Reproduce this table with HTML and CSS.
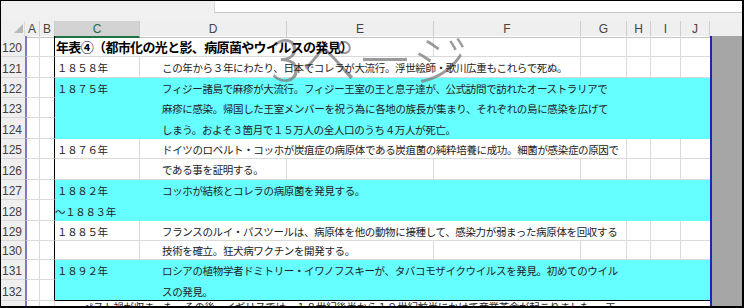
FILE: index.html
```html
<!DOCTYPE html>
<html lang="ja">
<head>
<meta charset="utf-8">
<title>年表④</title>
<link rel="stylesheet" href="styles.css">
</head>
<body>
<div class="frame">
  <div class="topbar"><div class="fx"></div></div>
  <div class="colhdr">
    <div class="hc corner"><svg width="24" height="14" viewBox="0 0 24 14"><polygon points="22,3 22,12 13,12" fill="#b9b9b9"/></svg></div>
    <div class="hc">A</div>
    <div class="hc">B</div>
    <div class="hc sel">C</div>
    <div class="hc">D</div>
    <div class="hc">E</div>
    <div class="hc">F</div>
    <div class="hc">G</div>
    <div class="hc">H</div>
    <div class="hc">I</div>
    <div class="hc">J</div>
    <div class="hc rest"></div>
  </div>
  <div class="sheet">
    <!-- 120 -->
    <div class="rh r1">120</div><div class="ca g r1"></div><div class="cb g r1"></div>
    <div class="cc to-e g t title r1"><span>年表④（都市化の光と影、病原菌やウイルスの発見）</span></div>
    <div class="cf g r1"></div><div class="cg g r1"></div><div class="ch g r1"></div><div class="ci g r1"></div><div class="cj g r1"></div>

    <!-- 121 -->
    <div class="rh r2">121</div><div class="ca g r2"></div><div class="cb g r2"></div>
    <div class="cc g t yr r2"><span>１８５８年</span></div>
    <div class="cd to-f g t dx r2"><span>この年から３年にわたり、日本でコレラが大流行。浮世絵師・歌川広重もこれらで死ぬ。</span></div>
    <div class="cg g r2"></div><div class="ch g r2"></div><div class="ci g r2"></div><div class="cj g r2"></div>

    <!-- 122-124 -->
    <div class="rh r3">122</div><div class="ca g r3"></div><div class="cb g r3"></div>
    <div class="rh r4">123</div><div class="ca g r4"></div><div class="cb g r4"></div>
    <div class="rh r5">124</div><div class="ca g r5"></div><div class="cb g r5"></div>
    <div class="fill cc to-j r3 h3"></div>
    <div class="cc t yr r3"><span>１８７５年</span></div>
    <div class="cd to-j t dx r3"><span>フィジー諸島で麻疹が大流行。フィジー王室の王と息子達が、公式訪問で訪れたオーストラリアで</span></div>
    <div class="cd to-j t dx r4"><span>麻疹に感染。帰国した王室メンバーを祝う為に各地の族長が集まり、それぞれの島に感染を広げて</span></div>
    <div class="cd to-j t dx r5"><span>しまう。およそ３箇月で１５万人の全人口のうち４万人が死亡。</span></div>

    <!-- 125-126 -->
    <div class="rh r6">125</div><div class="ca g r6"></div><div class="cb g r6"></div>
    <div class="cc g t yr r6"><span>１８７６年</span></div>
    <div class="cd to-g g t dx r6"><span>ドイツのロベルト・コッホが炭疽症の病原体である炭疽菌の純粋培養に成功。細菌が感染症の原因で</span></div>
    <div class="ch g r6"></div><div class="ci g r6"></div><div class="cj g r6"></div>
    <div class="rh r7">126</div><div class="ca g r7"></div><div class="cb g r7"></div>
    <div class="cc g r7"></div>
    <div class="cd g t dx r7"><span>である事を証明する。</span></div>
    <div class="ce g r7"></div><div class="cf g r7"></div><div class="cg g r7"></div><div class="ch g r7"></div><div class="ci g r7"></div><div class="cj g r7"></div>

    <!-- 127-128 -->
    <div class="rh r8">127</div><div class="ca g r8"></div><div class="cb g r8"></div>
    <div class="rh r9">128</div><div class="ca g r9"></div><div class="cb g r9"></div>
    <div class="fill cc to-j r8 h2"></div>
    <div class="cc t yr r8"><span>１８８２年</span></div>
    <div class="cd to-j t dx r8"><span>コッホが結核とコレラの病原菌を発見する。</span></div>
    <div class="cc to-d t yr tilde r9"><span>～１８８３年</span></div>

    <!-- 129-130 -->
    <div class="rh r10">129</div><div class="ca g r10"></div><div class="cb g r10"></div>
    <div class="cc g t yr r10"><span>１８８５年</span></div>
    <div class="cd to-g g t dx r10"><span>フランスのルイ・パスツールは、病原体を他の動物に接種して、感染力が弱まった病原体を回収する</span></div>
    <div class="ch g r10"></div><div class="ci g r10"></div><div class="cj g r10"></div>
    <div class="rh r11">130</div><div class="ca g r11"></div><div class="cb g r11"></div>
    <div class="cc g r11"></div>
    <div class="cd to-e g t dx r11"><span>技術を確立。狂犬病ワクチンを開発する。</span></div>
    <div class="cf g r11"></div><div class="cg g r11"></div><div class="ch g r11"></div><div class="ci g r11"></div><div class="cj g r11"></div>

    <!-- 131-132 -->
    <div class="rh r12">131</div><div class="ca g r12"></div><div class="cb g r12"></div>
    <div class="rh r13">132</div><div class="ca g r13"></div><div class="cb g r13"></div>
    <div class="fill end cc to-j r12 h2"></div>
    <div class="cc t yr r12"><span>１８９２年</span></div>
    <div class="cd to-j t dx r12"><span>ロシアの植物学者ドミトリー・イワノフスキーが、タバコモザイクウイルスを発見。初めてのウイル</span></div>
    <div class="cd to-j t dx r13"><span>スの発見。</span></div>

    <!-- 133 -->
    <div class="rh r14">133</div><div class="ca g r14"></div><div class="cb g plain r14"></div>
    <div class="cc to-j t low r14"><span>ペスト禍が収まった　その後、イギリスでは、１８世紀後半から１９世紀前半にかけて産業革命が起こりました。　工</span></div>

    <div class="pb"></div>
    <div class="out"></div>
    <div class="wm">3ページ</div>
  </div>
</div>
</body>
</html>
```

FILE: styles.css
```css
* { box-sizing: border-box; }
html, body { margin: 0; padding: 0; }
body {
  width: 744px;
  height: 308px;
  overflow: hidden;
  background: #000;
  font-family: "Noto Sans CJK JP", sans-serif;
}
.frame {
  width: 744px;
  height: 308px;
  border-style: solid;
  border-color: #000;
  border-width: 1px 2px 2px 1px;
  background: #fff;
  overflow: hidden;
  display: flex;
  flex-direction: column;
}
.topbar {
  flex: none;
  height: 20px;
  background: #f0f0f0;
  padding-left: 213px;
}
.fx {
  height: 12px;
  background: #fff;
  border-left: 1px solid #d6d6d6;
  border-bottom: 1px solid #c8c8c8;
}
.colhdr, .sheet {
  display: grid;
  grid-template-columns: 24px 15px 15px 85px 147px 147px 147px 46px 24px 30px 29px 2px 30px;
}
.colhdr {
  flex: none;
  height: 15px;
  background: #efefef;
  font: 12px/13px "Liberation Sans", Arial, sans-serif;
  color: #444;
}
.hc {
  border-right: 1px solid #cdcdcd;
  border-bottom: 1px solid #c4c4c4;
  text-align: center;
  padding-top: 2px;
}
.hc.corner { padding: 0; border-right-color: #dcdcdc; }
.hc.corner svg { display: block; }
.hc.sel {
  background: #d3d3d3;
  border-bottom: 2px solid #217346;
  color: #2a6a44;
}
.hc.rest { grid-column: 12 / 14; border-right: 0; }

.sheet {
  flex: 1;
  position: relative;
  overflow: hidden;
  grid-template-rows: 21px 21px 20px 20px 21px 20px 21px 20px 21px 20px 19px 20px 21px 20px;
  font-size: 10.5px;
  color: #222;
}

/* columns */
.rh { grid-column: 1; }
.ca { grid-column: 2; }
.cb { grid-column: 3; }
.cc { grid-column: 4; }
.cd { grid-column: 5; }
.ce { grid-column: 6; }
.cf { grid-column: 7; }
.cg { grid-column: 8; }
.ch { grid-column: 9; }
.ci { grid-column: 10; }
.cj { grid-column: 11; }
.to-d { grid-column-end: 6; }
.to-e { grid-column-end: 7; }
.to-f { grid-column-end: 8; }
.to-g { grid-column-end: 9; }
.to-j { grid-column-end: 12; }

/* rows */
.r1 { grid-row: 1; }
.r2 { grid-row: 2; }
.r3 { grid-row: 3; }
.r4 { grid-row: 4; }
.r5 { grid-row: 5; }
.r6 { grid-row: 6; }
.r7 { grid-row: 7; }
.r8 { grid-row: 8; }
.r9 { grid-row: 9; }
.r10 { grid-row: 10; }
.r11 { grid-row: 11; }
.r12 { grid-row: 12; }
.r13 { grid-row: 13; }
.r14 { grid-row: 14; }
.h2 { grid-row-end: span 2; }
.h3 { grid-row-end: span 3; }

.rh {
  background: #efefef;
  border-bottom: 1px solid #d6d6d6;
  font: 12px/13px "Liberation Sans", Arial, sans-serif;
  color: #404040;
  display: flex;
  align-items: flex-end;
  padding: 0 0 1px 1px;
}
.g {
  border-right: 1px solid #dadada;
  border-bottom: 1px solid #dadada;
}
.ca { border-left: 2px solid #7d79c9; }
.cb.g { border-right-color: #000; }
.cb.g.plain { border-right-color: #dadada; }
.cj.g { border-right: 0; }

.fill { background: #66ffff; }
.fill.end { border-bottom: 1px solid #000; }

.t {
  display: flex;
  align-items: center;
  padding-top: 2px;
  white-space: nowrap;
  line-height: 14px;
  letter-spacing: -0.35px;
}
.t > span { position: relative; z-index: 2; }
.yr { padding-left: 2px; }
.tilde { padding-left: 0; }
.dx { padding-left: 22px; }
.title {
  font-size: 13px;
  font-weight: 700;
  letter-spacing: -0.65px;
  color: #000;
  padding-left: 1px;
}
.t.low {
  align-items: flex-start;
  padding-top: 0;
  padding-left: 28px;
  line-height: 12px;
}

.pb { grid-column: 12; grid-row: 1 / -1; background: #2222b4; }
.out { grid-column: 13; grid-row: 1 / -1; background: #a6a6a6; }

.wm {
  position: absolute;
  left: 270px;
  top: -7px;
  font-family: "Noto Sans CJK JP", sans-serif;
  font-size: 56px;
  line-height: 56px;
  font-weight: 300;
  color: rgba(125, 125, 125, 0.78);
  white-space: nowrap;
  z-index: 1;
  pointer-events: none;
}
```
